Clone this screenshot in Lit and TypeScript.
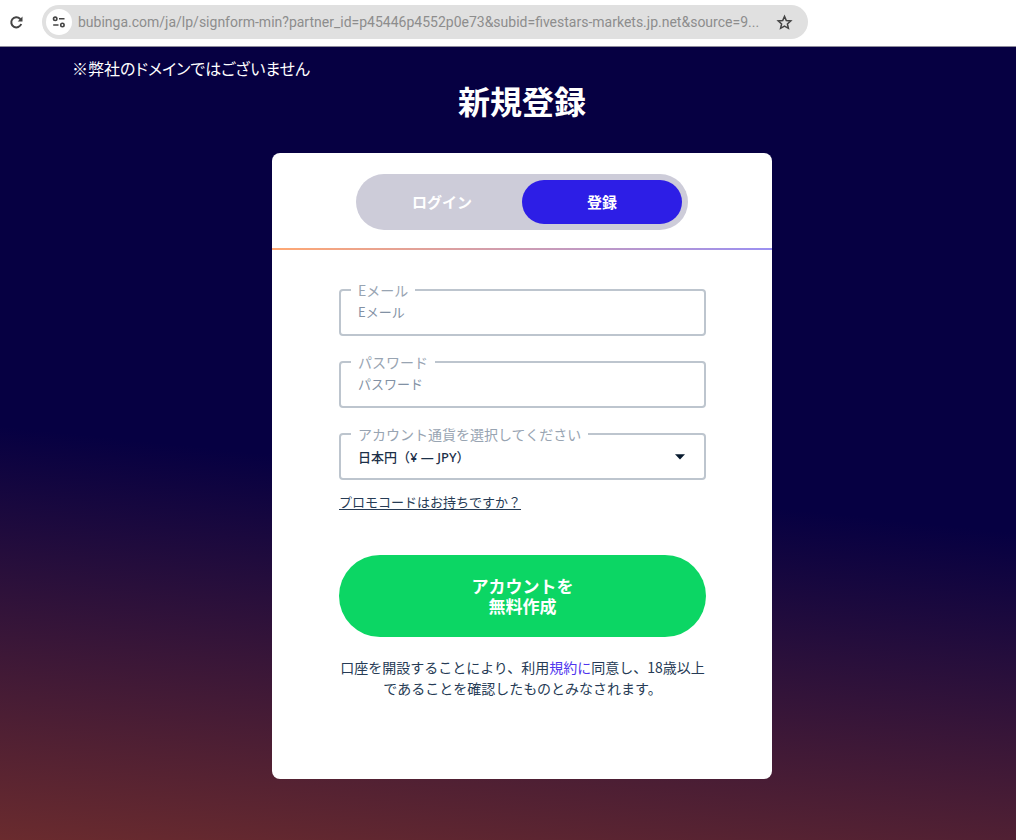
import { LitElement, html, css } from "lit";
import { customElement } from "lit/decorators.js";

@customElement("browser-bar")
class BrowserBar extends LitElement {
  static styles = css`
    :host {
      display: flex;
      align-items: center;
      gap: 17px;
      height: 47px;
      box-sizing: border-box;
      padding: 0 8px 2px;
      background: #fff;
      border-bottom: 1px solid #8e8c9c;
    }
    button {
      display: grid;
      place-items: center;
      padding: 0;
      border: 0;
      background: none;
      color: #444;
    }
    svg { display: block; }
    .omnibox {
      display: flex;
      align-items: center;
      flex: 0 1 766px;
      min-width: 0;
      height: 34px;
      box-sizing: border-box;
      padding: 0 15px 0 4px;
      border-radius: 17px;
      background: #e0e0e0;
    }
    .site {
      width: 26px;
      height: 26px;
      flex: none;
      border-radius: 50%;
      background: #fff;
    }
    .url {
      flex: 1;
      min-width: 0;
      margin: 0 16px 0 6px;
      padding: 0;
      border: 0;
      background: none;
      outline: 0;
      text-overflow: ellipsis;
      font: 14px/20px Roboto, "Liberation Sans", sans-serif;
      color: #8d8d8d;
    }
  `;

  render() {
    return html`
      <button aria-label="再読み込み">
        <svg width="17" height="17" viewBox="0 0 17 17" fill="none" stroke="currentColor" stroke-width="2">
          <path d="M13.2 10A5.1 5.1 0 1 1 12 4.7L13.4 6" />
          <path d="M14.5 2.6v4.8H9.7z" fill="currentColor" stroke="none" />
        </svg>
      </button>
      <div class="omnibox">
        <button class="site" aria-label="サイト情報">
          <svg width="14" height="12" viewBox="0 0 14 12" fill="none" stroke="currentColor" stroke-width="1.6">
            <circle cx="3.2" cy="2.8" r="1.7" />
            <path d="M7 2.8h5.5M1.2 9h5.3" />
            <circle cx="10.4" cy="9" r="1.7" />
          </svg>
        </button>
        <input class="url" aria-label="アドレス" readonly
          value="bubinga.com/ja/lp/signform-min?partner_id=p45446p4552p0e73&amp;subid=fivestars-markets.jp.net&amp;source=9..." />
        <button aria-label="ブックマーク">
          <svg width="17" height="17" viewBox="0 0 17 17" fill="none" stroke="currentColor" stroke-width="1.5">
            <path d="M8.5 2.4l1.8 4.1 4.5.4-3.4 3 1 4.4-3.9-2.3-3.9 2.3 1-4.4-3.4-3 4.5-.4z" />
          </svg>
        </button>
      </div>
    `;
  }
}

@customElement("signup-card")
class SignupCard extends LitElement {
  static styles = css`
    :host {
      display: block;
      width: 100%;
      max-width: 500px;
      box-sizing: border-box;
      padding-bottom: 80px;
      border-radius: 8px;
      background: #fff;
      color: #263b55;
      font-size: 13px;
    }
    button, input { font-family: inherit; }
    .head {
      display: flex;
      justify-content: center;
      padding: 21px 20px 18px;
    }
    .tabs {
      display: grid;
      grid-template-columns: 1fr 1fr;
      width: 332px;
      height: 56px;
      box-sizing: border-box;
      padding: 6px;
      border-radius: 28px;
      background: #cdccd9;
    }
    .tab {
      padding: 0 0 2px;
      border: 0;
      border-radius: 22px;
      background: none;
      color: #fff;
      font-size: 15px;
      font-weight: 700;
    }
    .tab.current { background: #2d1ee6; }
    .rule {
      height: 2px;
      background: linear-gradient(90deg, #ffa873, #9b90f2);
    }
    form {
      display: flex;
      flex-direction: column;
      align-items: stretch;
      padding: 30px 66px 0 67px;
    }
    .field {
      min-width: 0;
      height: 56px;
      box-sizing: border-box;
      margin: 0 0 16px;
      padding: 0 17px;
      border: 2px solid #bdc5ce;
      border-radius: 4px;
    }
    legend {
      margin-left: -7px;
      padding: 0 7px;
      font-size: 14px;
      line-height: 20px;
      color: #98a4b2;
    }
    .control {
      display: block;
      width: 100%;
      height: 24px;
      padding: 0;
      border: 0;
      outline: 0;
      background: none;
      font-size: 13px;
      line-height: 24px;
      color: #1c3049;
    }
    .control::placeholder { color: #8291a4; opacity: 1; }
    .pick { display: flex; align-items: center; padding-top: 1px; }
    select.control {
      appearance: none;
      font-family: "Noto Sans", "Noto Sans CJK JP", sans-serif;
      font-weight: 500;
    }
    .arrow { flex: none; margin-right: 2px; }
    a { color: inherit; }
    .promo { align-self: flex-start; margin-top: -4px; line-height: 20px; text-underline-offset: 2px; }
    .submit {
      height: 82px;
      margin: 43px 0 20px;
      padding: 0;
      border: 0;
      border-radius: 41px;
      background: #0cd664;
      color: #fff;
      font-size: 17px;
      font-weight: 700;
      line-height: 20px;
    }
    .consent {
      margin: 0;
      font-size: 14px;
      line-height: 21px;
      text-align: center;
    }
    .consent a { color: #4f35ee; text-decoration: none; }
  `;

  render() {
    return html`
      <div class="head">
        <div class="tabs" role="tablist">
          <button class="tab" role="tab" aria-selected="false">ログイン</button>
          <button class="tab current" role="tab" aria-selected="true">登録</button>
        </div>
      </div>
      <div class="rule"></div>
      <form @submit=${(e: Event) => e.preventDefault()}>
        <fieldset class="field">
          <legend><label for="email">Eメール</label></legend>
          <input class="control" id="email" type="email" placeholder="Eメール" />
        </fieldset>
        <fieldset class="field">
          <legend><label for="password">パスワード</label></legend>
          <input class="control" id="password" type="password" placeholder="パスワード" />
        </fieldset>
        <fieldset class="field">
          <legend><label for="currency">アカウント通貨を選択してください</label></legend>
          <div class="pick">
            <select class="control" id="currency">
              <option>日本円（¥ — JPY）</option>
            </select>
            <svg class="arrow" width="10" height="6" viewBox="0 0 10 6"><path d="M0 .3h10L5 5.6z" fill="#071a2e" /></svg>
          </div>
        </fieldset>
        <a class="promo" href="#promo">プロモコードはお持ちですか？</a>
        <button class="submit">アカウントを<br />無料作成</button>
        <p class="consent">口座を開設することにより、利用<a href="#terms">規約に</a>同意し、18歳以上であることを確認したものとみなされます。</p>
      </form>
    `;
  }
}

@customElement("app-root")
class AppRoot extends LitElement {
  static styles = css`
    :host {
      display: flex;
      flex-direction: column;
      min-height: 100vh;
      font-family: "Noto Sans CJK JP", sans-serif;
    }
    main {
      flex: 1;
      display: flex;
      flex-direction: column;
      align-items: center;
      padding: 9px 0 60px 28px;
      background: linear-gradient(186deg, #060042 54%, #6a2b2e 100%);
      color: #fff;
    }
    .note {
      align-self: flex-start;
      margin: 0 0 0 44px;
      font-size: 16px;
      line-height: 24px;
      font-feature-settings: "palt";
    }
    h1 {
      margin: 0 0 33px;
      font-size: 32px;
      line-height: 40px;
      font-weight: 700;
    }
  `;

  render() {
    return html`
      <browser-bar></browser-bar>
      <main>
        <p class="note">※弊社のドメインではございません</p>
        <h1>新規登録</h1>
        <signup-card></signup-card>
      </main>
    `;
  }
}
